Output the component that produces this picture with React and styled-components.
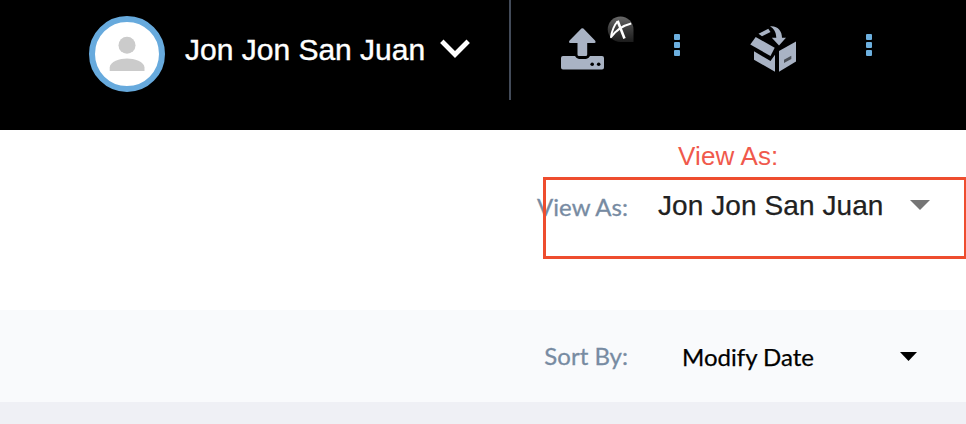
import React from "react";
import styled, { createGlobalStyle } from "styled-components";

const GlobalStyle = createGlobalStyle`
  * { box-sizing: border-box; }
  body { margin: 0; background: #fff; overflow: hidden; }
`;

const Page = styled.div`
  position: relative;
  width: 966px;
  height: 424px;
  overflow: hidden;
  background: #eff0f5;
  font-family: "Lato", sans-serif;
`;

const Header = styled.header`
  display: flex;
  align-items: flex-start;
  height: 130px;
  background: #000;
`;

const Profile = styled.div`
  display: flex;
  align-items: flex-start;
  width: 511px;
  height: 100px;
  padding: 16px 0 0 89px;
  border-right: 2px solid #434b59;
`;

const Avatar = styled.div`
  flex: none;
  width: 76px;
  height: 76px;
  border: 6px solid #67aadd;
  border-radius: 50%;
  background: #fff;
  svg { display: block; }
`;

const UserName = styled.span`
  flex: none;
  width: 255px;
  margin: 16px 0 0 20px;
  color: #fff;
  font: 30px/36px "Liberation Sans", Arial, sans-serif;
  -webkit-text-stroke: 0.4px #fff;
  white-space: nowrap;
`;

const Chevron = styled.svg`
  flex: none;
  margin-top: 22px;
`;

const Tools = styled.div`
  display: flex;
  padding-left: 48px;
  svg { flex: none; display: block; }
`;

const Tool = styled.div`
  display: flex;
  width: 191px;
`;

const Dots = styled.div`
  display: grid;
  gap: 2px;
  align-content: start;
  padding-top: 34px;
  margin-left: ${(p) => p.$gap}px;
`;

const Dot = styled.i`
  width: 6px;
  height: 6px;
  border-radius: 1px;
  background: #6db0df;
`;

const ViewRow = styled.section`
  display: flex;
  align-items: flex-start;
  height: 180px;
  padding: 61px 36px 0 0;
  background: #fff;
`;

const SortRow = styled.section`
  display: flex;
  align-items: flex-start;
  height: 92px;
  padding-top: 32px;
  background: #f9fafc;
`;

const Label = styled.label`
  flex: none;
  width: 628px;
  margin-top: ${(p) => p.$top}px;
  text-align: right;
  color: #778ba2;
  font: 24px/30px "Lato", sans-serif;
  -webkit-text-stroke: 0.3px #778ba2;
`;

const Person = styled.span`
  flex: none;
  width: 252px;
  margin-left: 30px;
  color: #212121;
  font: 28px/30px "Liberation Sans", Arial, sans-serif;
  letter-spacing: 0.08px;
  -webkit-text-stroke: 0.25px #212121;
  white-space: nowrap;
`;

const SortValue = styled.span`
  flex: none;
  width: 217.5px;
  margin-left: 54px;
  color: #000;
  font: 24px/30px "Lato", sans-serif;
  -webkit-text-stroke: 0.25px #000;
  white-space: nowrap;
`;

const Caret = styled.svg`
  flex: none;
  margin-top: ${(p) => p.$top}px;
`;

const Callout = styled.div`
  position: absolute;
  left: 543px;
  top: 177px;
  width: 423px;
  height: 82px;
  border: 3px solid #ee4d2e;
  border-right-width: 2px;
`;

const CalloutText = styled.div`
  position: absolute;
  left: 678px;
  top: 141px;
  color: #f0594c;
  font: 26px/30px "Liberation Sans", Arial, sans-serif;
  letter-spacing: 0.15px;
  white-space: nowrap;
`;

const MoreDots = ({ gap }) => (
  <Dots $gap={gap}><Dot /><Dot /><Dot /></Dots>
);

const UploadIcon = () => (
  <svg width="78" height="76" viewBox="559 0 78 76">
    <defs>
      <linearGradient id="badge" x1="0" y1="0" x2="0" y2="1">
        <stop offset="0" stopColor="#686868" />
        <stop offset="0.5" stopColor="#3c3c3c" />
        <stop offset="1" stopColor="#1c1c1c" />
      </linearGradient>
    </defs>
    <path fill="#a9b3c4" d="M581.4 28.6q1-.9 2 0l11.6 11.9q1.500 2.200-.7 2.400H587.200V54.500q0 1.500-1.500 1.500h-6.700q-1.500 0-1.500-1.500V42.900h-7.200q-2.200-.2-.7-2.400z" />
    <path fill="#a9b3c4" d="M563 56h12q1.600 3 4 3h7q2.400 0 4-3h12q2 0 2 2v9.500q0 2-2 2h-39q-2 0-2-2V58q0-2 2-2z" />
    <circle cx="592.2" cy="64.300" r="1.800" /><circle cx="598.700" cy="64.300" r="1.800" />
    <path fill="url(#badge)" d="M620.500 16.500a13 13 0 0 1 13 13V42h-13a12.700 12.700 0 0 1 0-25.500z" />
    <path fill="none" stroke="#fff" strokeWidth="1.900" strokeLinejoin="round" d="M631.200 23.500C623 25.500 616.500 29.500 611 37.200C611.500 31.500 614.500 24.500 617.600 21.300" />
    <path fill="none" stroke="#fff" strokeWidth="2.600" d="M617.600 20.800L624.500 38.500" />
  </svg>
);

const BoxIcon = () => (
  <svg width="50" height="76" viewBox="750 0 50 76" fill="#a9b3c4">
    <path d="M755.700 37L774.700 47.700 770.500 56 750.300 44.500z" />
    <path d="M754 51.300L770.500 61 775 54.800V71.700L754 59.700z" />
    <path d="M779 51L796 41.500V61.500L779 71.700z" />
    <path d="M758.500 33.700L768.300 28.800 770.500 32 762 36.300z" />
    <path d="M770 26.200C778 25.500 782 31 782 37.700H786L779 45.500 771.800 37.700H776.300C776 32 774 28.500 770 26.200z" />
    <path fill="#4b5057" d="M784 59.800L791.300 55.800V59L784 63z" />
  </svg>
);

export default function App() {
  return (
    <Page>
      <GlobalStyle />
      <Header>
        <Profile>
          <Avatar>
            <svg width="64" height="64" viewBox="95 22 64 64" fill="#cbcbcb">
              <circle cx="127" cy="45.300" r="8.500" />
              <path d="M109.700 71V67.500C109.700 61.500 120 58.400 127 58.400S144.500 61.500 144.500 67.500V71z" />
            </svg>
          </Avatar>
          <UserName>Jon Jon San Juan</UserName>
          <Chevron width="30" height="22" viewBox="440 38 30 22">
            <path d="M441.800 41.300L455 54.500 468.200 41.300" fill="none" stroke="#fff" strokeWidth="4.800" />
          </Chevron>
        </Profile>
        <Tools>
          <Tool><UploadIcon /><MoreDots gap={37} /></Tool>
          <Tool><BoxIcon /><MoreDots gap={66} /></Tool>
        </Tools>
      </Header>
      <ViewRow>
        <Label $top={1}>View As:</Label>
        <Person>Jon Jon San Juan</Person>
        <Caret $top={9} width="20" height="10" viewBox="0 0 20 10">
          <path fill="#757575" d="M0 0H20L10 10z" />
        </Caret>
      </ViewRow>
      <SortRow>
        <Label $top={-1}>Sort By:</Label>
        <SortValue>Modify Date</SortValue>
        <Caret $top={10} width="17" height="9" viewBox="0 0 17 9">
          <path fill="#000" d="M0 0H17L8.500 9z" />
        </Caret>
      </SortRow>
      <Callout />
      <CalloutText>View As:</CalloutText>
    </Page>
  );
}
